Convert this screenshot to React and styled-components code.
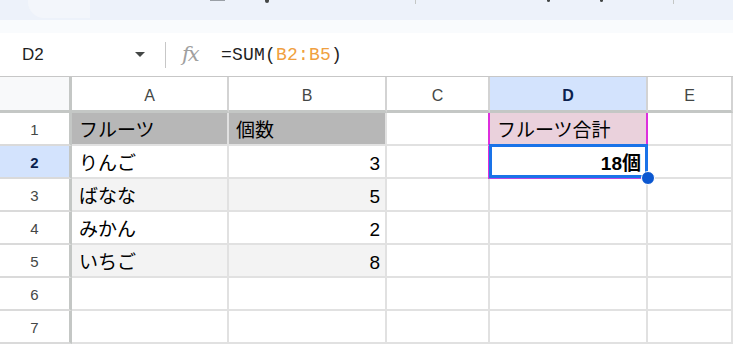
import React from "react";
import styled, {createGlobalStyle} from "styled-components";

const GlobalStyle = createGlobalStyle`
    html, body {
        margin: 0;
        padding: 0;
        background: #fff;
        font-family: "Liberation Sans", "Noto Sans CJK JP", sans-serif;
        overflow: hidden;
    }
`;

const Page = styled.div`
    width: 733px;
    height: 345px;
    overflow: hidden;
    display: flex;
    flex-direction: column;
`;

// 上のツールバー（切れている部分）
const Toolbar = styled.div`
    height: 20px;
    background: #edf2fa;
    display: flex;
    align-items: flex-start;
`;
const MenuPill = styled.div`
    width: 62px;
    height: 18px;
    margin-left: 28px;
    background: #f3f6fb;
    border-radius: 0 0 0 16px;
`;
const ToolMark = styled.div`
    margin-left: ${p => p.$left}px;
    width: ${p => p.$w}px;
    height: ${p => p.$h}px;
    background: ${p => p.$color};
    border-radius: ${p => p.$round ? "0 0 2px 2px" : "0"};
`;
const Spacer = styled.div`
    height: 13px;
    background: #f9fbfd;
`;

const FormulaBar = styled.div`
    height: 43px;
    display: flex;
    align-items: center;
    border-bottom: 1px solid #c7c7c7;
    background: #fff;
`;
const NameBox = styled.div`
    width: 165px;
    display: flex;
    align-items: center;
    justify-content: space-between;
    padding: 0 20px 0 22px;
    box-sizing: border-box;
    font-size: 17px;
    color: #1f1f1f;
`;
const Caret = styled.span`
    width: 0;
    height: 0;
    border-left: 5px solid transparent;
    border-right: 5px solid transparent;
    border-top: 5px solid #444746;
`;
const Divider = styled.div`
    width: 1px;
    height: 26px;
    background: #c7c7c7;
`;
const Fx = styled.span`
    margin-left: 16px;
    width: 22px;
    font-family: "DejaVu Serif", "Liberation Serif", serif;
    font-style: italic;
    font-size: 21px;
    color: #a0a0a0;
    letter-spacing: -2px;
    line-height: 1;
`;
const Formula = styled.span`
    margin-left: 17px;
    font-family: "Liberation Mono", monospace;
    font-size: 18px;
    color: #1f1f1f;
    letter-spacing: 0.2px;
`;
const Ref = styled.span`
    color: #f0a040;
`;

const Grid = styled.div`
    display: grid;
    grid-template-columns: 72px 157px 158px 103px 158px 1fr;
    grid-template-rows: 36px repeat(7, 33px);
`;
const Corner = styled.div`
    background: #f8f9fa;
    border-right: 3px solid #c4c7c5;
    border-bottom: 3px solid #c4c7c5;
    box-sizing: border-box;
`;
const ColHead = styled.div`
    display: flex;
    align-items: center;
    justify-content: center;
    box-sizing: border-box;
    border-right: 2px solid #d3d3d3;
    border-bottom: 3px solid #c4c7c5;
    font-size: 16px;
    padding-top: 4px;
    background: ${p => p.$active ? "#d3e3fd" : "#fff"};
    color: ${p => p.$active ? "#0b1f4d" : "#444746"};
    font-weight: ${p => p.$active ? 700 : 400};
`;
const RowHead = styled.div`
    display: flex;
    align-items: center;
    justify-content: center;
    box-sizing: border-box;
    border-right: 3px solid #c4c7c5;
    border-bottom: 2px solid #dadada;
    font-size: 15px;
    padding-top: 2px;
    background: ${p => p.$active ? "#d3e3fd" : "#fff"};
    color: ${p => p.$active ? "#0b1f4d" : "#444746"};
    font-weight: ${p => p.$active ? 700 : 400};
`;
const Cell = styled.div`
    position: relative;
    display: flex;
    align-items: flex-end;
    justify-content: ${p => p.$right ? "flex-end" : "flex-start"};
    box-sizing: border-box;
    padding: 0 5px 0 7px;
    border-right: 2px solid ${p => p.$mark ? "#dd2fdd" : "#e1e1e1"};
    border-left: ${p => p.$mark ? "2px solid #dd2fdd" : "none"};
    margin-left: ${p => p.$mark ? "-2px" : "0"};
    border-bottom: 2px solid ${p => p.$markBottom ? "#b848e0" : "#e1e1e1"};
    background: ${p => p.$bg || "#fff"};
    font-size: 19px;
    font-weight: ${p => p.$bold ? 700 : 400};
    color: #000;
    line-height: 27px;
    white-space: nowrap;
`;
const Selection = styled.div`
    position: absolute;
    left: -1px;
    top: -2px;
    right: -2px;
    bottom: -1px;
    border: 3px solid #1a73e8;
    pointer-events: none;
`;
const Handle = styled.div`
    position: absolute;
    right: -9px;
    bottom: -8px;
    width: 12px;
    height: 12px;
    border-radius: 50%;
    background: #0b57d0;
    border: 1px solid #fff;
    z-index: 2;
`;

const columns = ["A", "B", "C", "D", "E"];
const fruits = [
    ["りんご", 3],
    ["ばなな", 5],
    ["みかん", 2],
    ["いちご", 8],
];

function App() {
    const rows = [];

    // 1行目 見出し
    rows.push(
        <React.Fragment key="r1">
            <RowHead>1</RowHead>
            <Cell $bg="#b7b7b7">フルーツ</Cell>
            <Cell $bg="#b7b7b7">個数</Cell>
            <Cell/>
            <Cell $bg="#ead1dc" $mark>フルーツ合計</Cell>
            <Cell/>
        </React.Fragment>
    );

    fruits.forEach((f, i) => {
        const n = i + 2;
        const band = n % 2 === 1 ? "#f3f3f3" : "#fff";
        rows.push(
            <React.Fragment key={"r" + n}>
                <RowHead $active={n === 2}>{n}</RowHead>
                <Cell $bg={band}>{f[0]}</Cell>
                <Cell $bg={band} $right>{f[1]}</Cell>
                <Cell/>
                {n === 2 ? (
                    <Cell $right $bold $mark $markBottom>
                        18個
                        <Selection/>
                        <Handle/>
                    </Cell>
                ) : <Cell/>}
                <Cell/>
            </React.Fragment>
        );
    });

    [6, 7].forEach((n) => {
        rows.push(
            <React.Fragment key={"r" + n}>
                <RowHead>{n}</RowHead>
                <Cell/><Cell/><Cell/><Cell/><Cell/>
            </React.Fragment>
        );
    });

    return <Page>
        <GlobalStyle/>
        <Toolbar>
            <MenuPill/>
            <ToolMark $left={120} $w={15} $h={1} $color="#9aa0a6"/>
            <ToolMark $left={40} $w={4} $h={3} $color="#444746" $round/>
            <ToolMark $left={146} $w={1} $h={4} $color="#c4c7c5"/>
            <ToolMark $left={131} $w={3} $h={2} $color="#444746" $round/>
            <ToolMark $left={50} $w={3} $h={2} $color="#444746" $round/>
            <ToolMark $left={70} $w={1} $h={4} $color="#c4c7c5"/>
        </Toolbar>
        <Spacer/>
        <FormulaBar>
            <NameBox>D2<Caret/></NameBox>
            <Divider/>
            <Fx>fx</Fx>
            <Formula>=SUM(<Ref>B2:B5</Ref>)</Formula>
        </FormulaBar>
        <Grid>
            <Corner/>
            {columns.map((c) => (
                <ColHead key={c} $active={c === "D"}>{c}</ColHead>
            ))}
            {rows}
        </Grid>
    </Page>;
}

export default App;
